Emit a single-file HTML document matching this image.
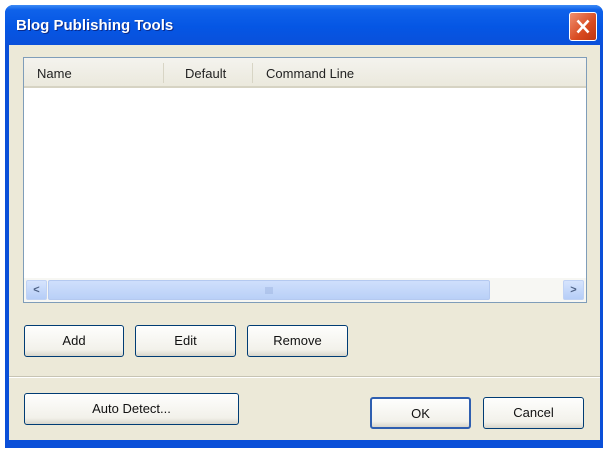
<html><head><style>
body{margin:0;width:604px;height:451px;overflow:hidden;background:#fff;font-family:"Liberation Sans",sans-serif;}
.win{position:absolute;left:5px;top:5px;width:598px;height:443px;background:#0a4fd8;border-radius:8px 8px 0 0;}
.title{position:absolute;left:5px;top:5px;width:598px;height:40px;border-radius:8px 8px 0 0;background:linear-gradient(#3d8bf5 0%,#0f62ea 12%,#0556e4 55%,#0a50da 100%);}
.title span{position:absolute;left:11px;top:12px;color:#fff;font-weight:bold;font-size:15px;text-shadow:1px 1px #0a2a8a;}
.close{position:absolute;left:564px;top:7px;width:26px;height:27px;border:1px solid #fff;border-radius:3px;background:linear-gradient(135deg,#f09070,#d84a20 60%,#c03510);}
.client{position:absolute;left:9px;top:45px;width:591px;height:395px;background:#ece9d8;}
.list{position:absolute;left:23px;top:57px;width:562px;height:244px;border:1px solid #7f9db9;background:#fff;}
.hdr{position:absolute;left:0;top:0;width:562px;height:28px;background:linear-gradient(#f4f3ee,#ebe9dd);border-bottom:2px solid #d6d3c3;font-size:13px;color:#222;}
.hdr span{position:absolute;top:8px;}
.sep{position:absolute;top:5px;width:1px;height:20px;background:#d8d5c5;}
.sb{position:absolute;left:0;top:220px;width:562px;height:24px;background:#f7f7f3;}
.arr{position:absolute;top:2px;width:19px;height:18px;border-radius:2px;background:linear-gradient(#d6e4fd,#b5cdf7);border:1px solid #c0d2f4;font-size:11px;color:#4d6185;text-align:center;line-height:18px;font-weight:bold;}
.thumb{position:absolute;left:24px;top:2px;width:440px;height:18px;border-radius:2px;background:linear-gradient(#cfdffc,#b9d0f7);border:1px solid #b4c9f0;}
.btn{position:absolute;height:32px;border:1px solid #003c74;border-radius:3px;background:linear-gradient(#fefefd,#f2f1ea 80%,#d8d6cb);font-size:13px;color:#111;text-align:center;line-height:30px;box-sizing:border-box;}
.hr{position:absolute;left:9px;width:591px;top:376px;height:1px;background:#c7c4b4;border-bottom:1px solid #fff;}
</style></head><body>
<div class="win"></div>
<div class="title"><span>Blog Publishing Tools</span>
<div class="close"><svg width="26" height="27"><path d="M7.5 7.5L18.5 19.5M18.5 7.5L7.5 19.5" stroke="#fff" stroke-width="2.6"/></svg></div></div>
<div class="client"></div>
<div class="list">
<div class="hdr"><span style="left:13px">Name</span><div class="sep" style="left:139px"></div><span style="left:161px">Default</span><div class="sep" style="left:228px"></div><span style="left:242px">Command Line</span></div>
<div class="sb"><div class="arr" style="left:2px">&lt;</div><div class="thumb"><svg width="440" height="18"><path d="M217 6v7M219 6v7M221 6v7M223 6v7" stroke="#9db4e0"/></svg></div><div class="arr" style="left:539px">&gt;</div></div>
</div>
<div class="btn" style="left:24px;top:325px;width:100px">Add</div>
<div class="btn" style="left:135px;top:325px;width:101px">Edit</div>
<div class="btn" style="left:247px;top:325px;width:101px">Remove</div>
<div class="hr"></div>
<div class="btn" style="left:24px;top:393px;width:215px">Auto Detect...</div>
<div class="btn" style="left:370px;top:397px;width:101px;border:2px solid #2f5fb0">OK</div>
<div class="btn" style="left:483px;top:397px;width:101px">Cancel</div>
</body></html>
